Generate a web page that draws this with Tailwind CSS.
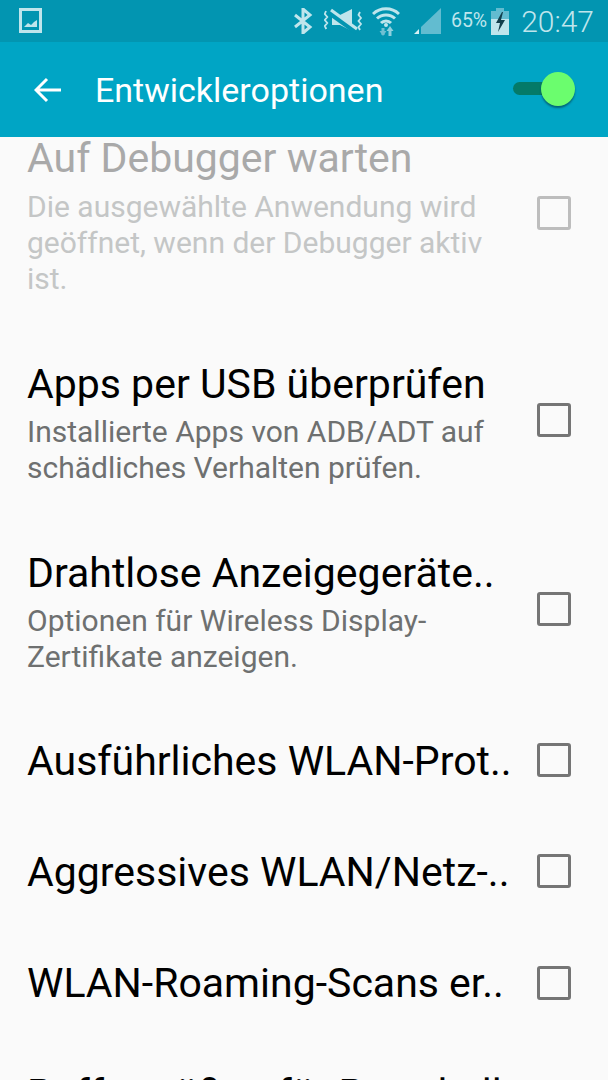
<!DOCTYPE html>
<html lang="de">
<head>
  <meta charset="UTF-8">
  <meta name="viewport" content="width=device-width, initial-scale=1.0">
  <title>Entwickleroptionen</title>
  <script src="https://cdn.jsdelivr.net/npm/@tailwindcss/browser@4"></script>
</head>
<body class="bg-[#fafafa] font-['Roboto',sans-serif]">
  <div class="w-[608px] h-[1080px] overflow-hidden flex flex-col">
    <!-- status bar -->
    <div class="h-[42px] shrink-0 bg-[#0295b1] flex items-center pl-[19px] pr-[14px] text-[#bfe5ec]">
      <svg width="24" height="26" viewBox="0 0 24 26"><rect x="1.5" y="1.5" width="20" height="22" fill="none" stroke="#bfe5ec" stroke-width="3"/><path d="M5 19l4-4 3 2 3-3 3-2v7z" fill="#bfe5ec"/></svg>
      <div class="ml-auto flex items-center">
        <svg width="19" height="26" viewBox="0 0 19 26" fill="none" stroke="#bfe5ec" stroke-width="3"><path d="M1 7l15 12-7 6V1l7 6L1 19"/></svg>
        <svg class="ml-[11px]" width="39" height="26" viewBox="0 0 39 26" fill="none" stroke="#bfe5ec"><path d="M8 7h8l12-6v22l-12-6H8z" fill="#bfe5ec" stroke="none"/><path d="M7 6l25 18" stroke="#0295b1" stroke-width="5"/><path d="M7 2l26 19" stroke-width="3.200"/><path d="M2 3L0.800 6l2.500 3-2.500 3 2.500 3-2.500 3 1.500 3M36 4l-1.500 3 2.500 3-2.500 3 2.500 3-2.500 3 1.500 3" stroke-width="1.800"/></svg>
        <svg class="ml-[9px]" width="28" height="30" viewBox="0 0 28 30" fill="none" stroke="#bfe5ec" stroke-width="3"><path d="M1 8a19 19 0 0 1 26 0M5 12.500a13 13 0 0 1 18 0M9 17a7 7 0 0 1 10 0"/><circle cx="14" cy="19" r="2" fill="#bfe5ec" stroke="none"/><path d="M11 22v7" stroke="#6fc0d2"/><path d="M7.500 25l3.500 5 3.500-5z" fill="#6fc0d2" stroke="none"/><path d="M18 30v-7" stroke="#8fd0de"/><path d="M14.500 25l3.500-5 3.500 5z" fill="#8fd0de" stroke="none"/></svg>
        <svg class="ml-[13px]" width="28" height="26" viewBox="0 0 28 26"><path d="M1 26l5-5v5z" fill="#d6eff4"/><path d="M8 26v-7L28 0v26z" fill="#62bcd0"/></svg>
        <span class="ml-[10px] text-[19.5px] leading-none">65%</span>
        <svg class="ml-[4px]" width="18" height="27" viewBox="0 0 18 27"><path d="M5 0h8v3h5v24H0V3h5z" fill="#bfe5ec"/><path d="M0 3h18v8H0zM5 0h8v3H5z" fill="#62bcd0"/><path d="M11 4l-6 11h4l-2 9 7-12h-4l2-8z" fill="#123f4c"/></svg>
        <span class="ml-[12px] text-[30px] leading-none font-light relative top-[1px]">20:47</span>
      </div>
    </div>
    <!-- action bar -->
    <div class="h-[95px] shrink-0 bg-[#00a5c5] flex items-center pl-[34px] pr-[33px] text-white">
      <svg width="28" height="26" viewBox="0 0 28 26" fill="none" stroke="white" stroke-width="3"><path d="M27 13H2M13 2L2 13l11 11"/></svg>
      <span class="ml-[33px] text-[34px] leading-none">Entwickleroptionen</span>
      <div class="ml-auto relative w-[62px] h-[36px]">
        <div class="absolute left-0 top-[10px] w-[40px] h-[13px] rounded-full bg-[#047a68]"></div>
        <div class="absolute right-0 top-0 w-[34px] h-[34px] rounded-full bg-[#6bfd6e] shadow-[0_2px_2px_rgba(0,60,70,0.6)]"></div>
      </div>
    </div>
    <!-- settings list -->
    <div class="flex-1 pl-[27px] pr-[37px] overflow-hidden">
      <div class="flex items-start h-[189px]">
        <div class="w-[481px]">
          <div class="text-[41px] leading-[44px] -mt-[1px] text-[#a9a9a9] whitespace-nowrap">Auf Debugger warten</div>
          <div class="text-[30px] leading-[36px] mt-[9px] text-[#c4c6c6]">Die ausgewählte Anwendung wird geöffnet, wenn der Debugger aktiv ist.</div>
        </div>
        <div class="ml-auto mt-[59px] w-[34px] h-[34px] rounded-[3px] border-[3px] border-[#bdbdbd]"></div>
      </div>
      <div class="flex items-start h-[189px] pt-[36px]">
        <div class="w-[481px]">
          <div class="text-[41px] leading-[44px] text-black whitespace-nowrap">Apps per USB überprüfen</div>
          <div class="text-[30px] leading-[36px] mt-[8px] text-[#6e7070]">Installierte Apps von ADB/ADT auf schädliches Verhalten prüfen.</div>
        </div>
        <div class="ml-auto mt-[41px] w-[34px] h-[34px] rounded-[3px] border-[3px] border-[#757575]"></div>
      </div>
      <div class="flex items-start h-[189px] pt-[36px]">
        <div class="w-[481px]">
          <div class="text-[41px] leading-[44px] text-black whitespace-nowrap">Drahtlose Anzeigegeräte..</div>
          <div class="text-[30px] leading-[36px] mt-[8px] text-[#6e7070]">Optionen für Wireless Display-Zertifikate anzeigen.</div>
        </div>
        <div class="ml-auto mt-[41px] w-[34px] h-[34px] rounded-[3px] border-[3px] border-[#757575]"></div>
      </div>
      <div class="flex items-center h-[111.5px]">
        <div class="text-[41px] leading-[44px] pt-[2px] text-black whitespace-nowrap">Ausführliches WLAN-Prot..</div>
        <div class="ml-auto w-[34px] h-[34px] rounded-[3px] border-[3px] border-[#757575]"></div>
      </div>
      <div class="flex items-center h-[111.5px]">
        <div class="text-[41px] leading-[44px] pt-[2px] text-black whitespace-nowrap">Aggressives WLAN/Netz-..</div>
        <div class="ml-auto w-[34px] h-[34px] rounded-[3px] border-[3px] border-[#757575]"></div>
      </div>
      <div class="flex items-center h-[111.5px]">
        <div class="text-[41px] leading-[44px] text-black whitespace-nowrap">WLAN-Roaming-Scans er..</div>
        <div class="ml-auto w-[34px] h-[34px] rounded-[3px] border-[3px] border-[#757575]"></div>
      </div>
      <div class="flex items-center h-[111.5px]">
        <div class="text-[41px] leading-[44px] text-black whitespace-nowrap">Puffergrößen für Protokoll</div>
      </div>
    </div>
  </div>
</body>
</html>
